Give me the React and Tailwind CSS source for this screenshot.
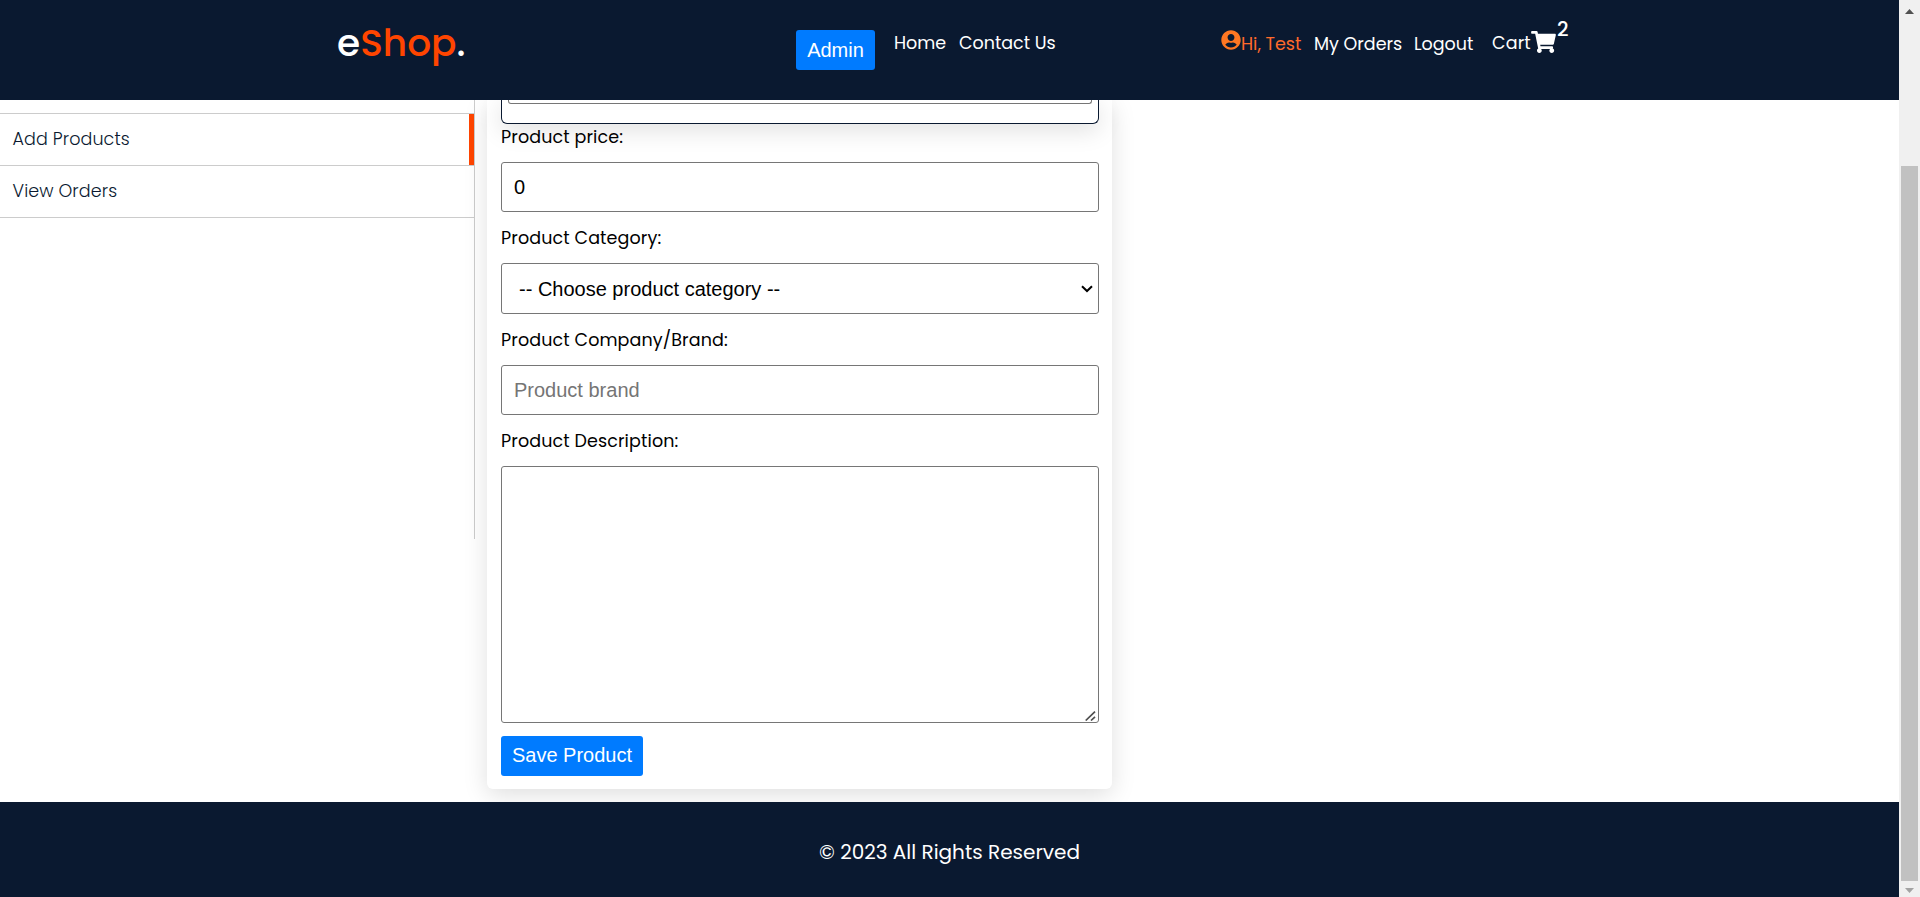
import React from "react";
import { FaShoppingCart, FaUserCircle } from "react-icons/fa";

const FIELD =
  "block w-full rounded-[3px] border border-[#767676] bg-white px-3 text-[20px] text-black outline-none font-['Liberation_Sans',Arial,sans-serif] placeholder:text-[#757575]";
const BUTTON =
  "h-10 shrink-0 rounded-[3px] bg-[#007bff] text-center text-[20px] text-white whitespace-nowrap font-['Liberation_Sans',Arial,sans-serif]";

function Header() {
  return (
    <header className="relative z-10 flex h-[100px] shrink-0 items-start bg-[#0a1930] text-[17.5px] leading-[26px] whitespace-nowrap text-white">
      <h2 className="mt-[23px] ml-[337px] w-[459px] text-[37.5px] leading-10 font-medium">
        e<span className="text-[#ff4500]">Shop</span>.
      </h2>
      <nav className="flex w-[425px] items-start">
        <button className={BUTTON + " mt-[30px] w-[79px] leading-10"}>Admin</button>
        <a className="mt-[30px] ml-[19px] w-[65px]">Home</a>
        <a className="mt-[30px]">Contact Us</a>
      </nav>
      <div className="flex items-start">
        <a className="flex w-[93px] items-start text-[#ff7722]">
          <FaUserCircle className="mt-[30px] size-5 shrink-0" />
          <span className="mt-[31px] text-[#ff6a2b]">Hi, Test</span>
        </a>
        <a className="mt-[31px] w-[100px]">My Orders</a>
        <a className="mt-[31px] w-[78px]">Logout</a>
        <a className="flex items-start">
          <span className="mt-[30px] w-[39px] tracking-[0.15px]">Cart</span>
          <FaShoppingCart className="mt-[31px] h-[22px] w-[25px]" />
          <span className="mt-[16px] ml-px text-[20px] font-medium">2</span>
        </a>
      </div>
    </header>
  );
}

function Sidebar() {
  return (
    <aside className="h-[439px] w-[475px] shrink-0 border-r border-[#cccccc] pt-[13px] text-[17.5px] font-light tracking-[0.1px] text-[#0a1930]">
      <ul>
        <li className="h-[52px] border-t border-[#cccccc]">
          <a className="block h-[51px] border-r-[5px] border-[#ff4500] pt-3 pl-[12.5px] leading-[26px]">Add Products</a>
        </li>
        <li className="h-[53px] border-y border-[#cccccc]">
          <a className="block pt-3 pl-[12.5px] leading-[26px]">View Orders</a>
        </li>
      </ul>
    </aside>
  );
}

function ProductForm() {
  return (
    <form className="ml-3 flex h-[689px] w-[625px] flex-col rounded-b-[6px] bg-white pr-[13px] pl-[14px] text-[17.5px] leading-[26px] tracking-[0.12px] shadow-[0_6px_24px_rgba(0,0,0,0.13)]">
      <div className="h-6 shrink-0 rounded-b-[6px] border border-t-0 border-[#0a1930] px-[6px] shadow-[0_6px_24px_rgba(0,0,0,0.13)]">
        <div className="h-1 rounded-b-[3px] border border-t-0 border-[#767676]" />
      </div>
      <label className="relative mb-3">Product price:</label>
      <input className={FIELD + " h-[50px] shrink-0 tracking-normal"} type="text" defaultValue="0" />
      <label className="mt-[13px] mb-3">Product Category:</label>
      <div className="relative h-[51px] shrink-0">
        <select className={FIELD + " h-[51px] appearance-none pl-[17px] tracking-normal"}>
          <option>-- Choose product category --</option>
        </select>
        <svg className="pointer-events-none absolute top-[22px] right-[6px] h-[8px] w-[12px]" viewBox="0 0 12 8" fill="none">
          <path d="M1 1.2 L6 6 L11 1.2" stroke="#000" strokeWidth="2" />
        </svg>
      </div>
      <label className="mt-[13px] mb-3">Product Company/Brand:</label>
      <input className={FIELD + " h-[50px] shrink-0 tracking-normal"} type="text" placeholder="Product brand" />
      <label className="mt-[13px] mb-3">Product Description:</label>
      <div className="relative h-[257px] shrink-0">
        <textarea className={FIELD + " h-[257px] resize-none"} />
        <svg className="pointer-events-none absolute right-[3px] bottom-[2px] h-[10px] w-[11px]" viewBox="0 0 11 10" fill="none">
          <path d="M0.7 9.5 L10 0.6 M6 9.5 L10 5.8" stroke="#505050" strokeWidth="1.7" />
        </svg>
      </div>
      <button
        type="button"
        className={BUTTON + " mt-[13px] flex w-[142px] items-start justify-center leading-[38px] tracking-normal"}
      >
        Save Product
      </button>
    </form>
  );
}

function Scrollbar() {
  return (
    <div className="flex h-full w-[21px] shrink-0 flex-col items-center bg-[#f0f0f0]">
      <svg className="mt-[9px] h-[5px] w-[9px]" viewBox="0 0 9 5">
        <path d="M4.5 0 L9 5 H0 Z" fill="#505050" />
      </svg>
      <div className="mt-[152px] h-[715px] w-[17px] bg-[#c1c1c1]" />
      <svg className="mt-[7px] h-[5px] w-[9px]" viewBox="0 0 9 5">
        <path d="M0 0 H9 L4.5 5 Z" fill="#a3a3a3" />
      </svg>
    </div>
  );
}

export default function App() {
  return (
    <div className="flex h-[897px] w-[1920px] overflow-hidden bg-white font-[Poppins,Inter,sans-serif] text-black">
      <div className="flex w-[1899px] flex-col">
        <Header />
        <main className="flex h-[702px] shrink-0 items-start overflow-hidden">
          <Sidebar />
          <ProductForm />
        </main>
        <footer className="flex h-[95px] shrink-0 items-start justify-center bg-[#0a1930] pt-9 text-[20px] leading-[28px] text-white">
          © 2023 All Rights Reserved
        </footer>
      </div>
      <Scrollbar />
    </div>
  );
}
